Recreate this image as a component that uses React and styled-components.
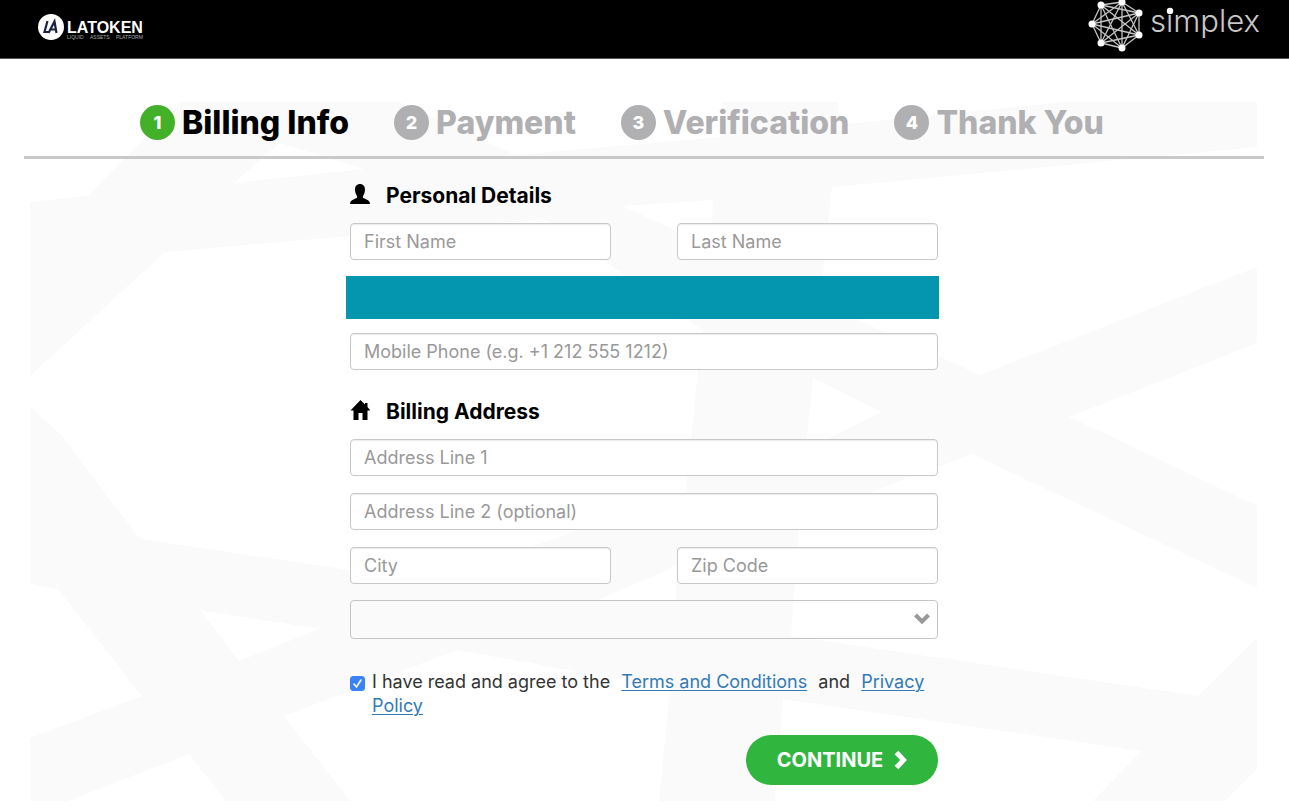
import React, { useState } from 'react';
import styled, { createGlobalStyle } from 'styled-components';

const GlobalStyle = createGlobalStyle`
  *,
  *:before,
  *:after {
    box-sizing: border-box;
  }

  body {
    margin: 0;
    background: #fff;
    color: #333;
    font-family: Inter, 'Open Sans', sans-serif;
    font-size: 18px;
    line-height: 24px;
  }
`;

const StyledHeader = styled.header`
  display: flex;
  justify-content: space-between;
  align-items: flex-start;
  height: 59px;
  padding: 0 24px 0 38px;
  overflow: hidden;
  background: #000;
  border-bottom: 1px solid #555;
`;

const StyledLatoken = styled.a`
  display: flex;
  align-items: flex-start;
  gap: 3px;
  padding-top: 14px;
  color: #fff;
  font-family: 'Liberation Sans', sans-serif;
  text-decoration: none;

  svg {
    display: block;
  }
`;

const StyledWordmark = styled.span`
  display: block;
  padding-top: 6px;
  font-size: 16px;
  font-weight: 700;
  line-height: 15px;
`;

const StyledTagline = styled.span`
  display: flex;
  justify-content: space-between;
  color: #aaa;
  font-size: 5px;
  font-weight: 400;
  line-height: 5px;
`;

const StyledMain = styled.main`
  position: relative;
  margin: 43px 25px 11px 24px;
`;

const StyledArtwork = styled.svg`
  position: absolute;
  top: 0;
  left: 6px;
  z-index: -1;
  width: calc(100% - 13px);
  height: 100%;
`;

const StyledSteps = styled.ol`
  display: flex;
  gap: 45px;
  margin: 0;
  padding: 3px 0 16px 116px;
  list-style: none;
  border-bottom: 3px solid #c9c9c9;
`;

const StyledStep = styled.li`
  display: flex;
  align-items: center;
  gap: 7px;
  color: ${({ $active }) => ($active ? '#000' : '#b0b0b3')};
  font-size: 32px;
  font-weight: 800;
  line-height: 35px;
  white-space: nowrap;
`;

const StyledNumber = styled.span`
  width: 35px;
  height: 35px;
  border-radius: 50%;
  background: ${({ $active }) => ($active ? '#43b02a' : '#b0b0b3')};
  color: #fff;
  font-size: 18px;
  font-weight: 800;
  text-align: center;
`;

const StyledForm = styled.form`
  display: flex;
  flex-direction: column;
  gap: 17px;
  max-width: 588px;
  margin: 0 auto;
  padding: 25px 0 16px;
`;

const StyledHeading = styled.h2`
  display: flex;
  align-items: flex-start;
  gap: 16px;
  margin: ${({ $spaced }) => ($spaced ? '13px 0 -2px' : '0 0 -2px')};
  color: #000;
  font-size: 21px;
  font-weight: 700;
  line-height: 24px;
`;

const StyledRow = styled.div`
  display: grid;
  grid-template-columns: 1fr 1fr;
  gap: 66px;
`;

const StyledInput = styled.input`
  width: 100%;
  height: 37px;
  padding: 0 13px;
  border: 1px solid #c8c8c8;
  border-radius: 4px;
  background: #fff;
  box-shadow: inset 0 1px 1px rgba(0, 0, 0, 0.08);
  color: #333;
  font: inherit;

  &::placeholder {
    color: #999;
    opacity: 1;
  }
`;

const StyledBanner = styled.div`
  height: 43px;
  margin: -1px -1px -3px -4px;
  background: #0396ae;
`;

const StyledSelectWrap = styled.div`
  position: relative;
  margin-top: -1px;

  select {
    display: block;
    width: 100%;
    height: 39px;
    padding: 0 40px 0 13px;
    appearance: none;
    border: 1px solid #c4c4c4;
    border-radius: 4px;
    background: transparent;
    font: inherit;
  }

  svg {
    position: absolute;
    top: 12px;
    right: 8px;
    pointer-events: none;
  }
`;

const StyledAgreement = styled.div`
  display: flex;
  align-items: flex-start;
  gap: 7px;
  margin-top: 14px;

  a {
    margin: 0 6px;
    color: #337ab7;
    text-decoration: underline;
    text-decoration-thickness: 1px;
    text-underline-offset: 2px;

    &:last-child {
      margin-right: 0;
    }
  }
`;

const StyledCheck = styled.span`
  position: relative;
  flex: none;
  width: 15px;
  height: 15px;
  margin-top: 6px;

  input {
    display: block;
    width: 15px;
    height: 15px;
    margin: 0;
    appearance: none;
    border: 1px solid #b5b5b5;
    border-radius: 3px;
    background: #fff;

    &:checked {
      border-color: #3b82f7;
      background: #3b82f7;
    }
  }

  svg {
    position: absolute;
    top: 0;
    left: 0;
    pointer-events: none;
  }
`;

const StyledContinue = styled.button`
  display: flex;
  align-items: center;
  justify-content: center;
  align-self: flex-end;
  gap: 11px;
  width: 192px;
  height: 50px;
  padding: 0;
  border: 0;
  border-radius: 25px;
  background: #30b53f;
  color: #fff;
  font: inherit;
  font-size: 20px;
  font-weight: 700;
  cursor: pointer;
`;

// White facets laid over a light grey sheet
const facets = [
  '30,102 181,102 88,196 30,202',
  '280,143 364,169 234,183',
  '399,102 722,102 722,137 515,155',
  '838,102 1065,102 838,125',
  '832,187 1257,147 1257,267 980,375 820,303',
  '622,206 713,200 711,247',
  '165,252 545,219 702,330 686,492 576,531 430,583 343,569 140,539 62,436 30,407 30,376',
  '813,378 882,412 806,450',
  '972,454 1257,588 1257,638 1198,696 791,636 799,525 879,489',
  '1069,417 1257,343 1257,506 1110,436',
  '598,600 676,566 676,600',
  '30,584 58,589 142,696 30,738',
  '200,610 319,629 239,661',
  '68,801 189,754 226,801',
  '457,650 670,688 659,801 350,801 284,716',
  '783,699 1141,751 1093,801 775,801',
  '1257,769 1225,801 1257,801',
];

const Artwork = () => (
  <StyledArtwork viewBox="30 102 1227 699" preserveAspectRatio="none" aria-hidden="true">
    <rect x="30" y="102" width="1227" height="699" fill="#fafafa" />
    {facets.map(points => (
      <polygon key={points} points={points} fill="#fff" />
    ))}
  </StyledArtwork>
);

const nodes = [
  [31, 5],
  [52, 2],
  [69, 13],
  [69, 35],
  [52, 48],
  [31, 43],
  [22, 24],
];

const SimplexLogo = () => (
  <svg width="195" height="58" viewBox="0 0 195 58" role="img" aria-label="simplex">
    <g stroke="#c4c4c4" strokeWidth="1.3">
      {nodes.flatMap(([x1, y1], i) =>
        nodes
          .slice(i + 1)
          .map(([x2, y2]) => <line key={`${x1}${y1}${x2}${y2}`} x1={x1} y1={y1} x2={x2} y2={y2} />),
      )}
    </g>
    {nodes.map(([x, y]) => (
      <circle key={`${x}${y}`} cx={x} cy={y} r="3.5" fill="#fff" />
    ))}
    <text x="80" y="32" fill="#c8c8c8" fontFamily="Inter, sans-serif" fontSize="31" fontWeight="300">
      simplex
    </text>
    <circle cx="100" cy="11" r="3.2" fill="#fff" />
  </svg>
);

const LatokenMark = () => (
  <svg width="26" height="26" viewBox="0 0 26 26" aria-hidden="true">
    <circle cx="13" cy="13" r="13" fill="#fff" />
    <path
      d="M9.5 7L6.5 18H11M10.5 19L16.5 7.5L18.5 19M13 15.5H18"
      fill="none"
      stroke="#1c2340"
      strokeWidth="2.2"
    />
  </svg>
);

const UserIcon = () => (
  <svg width="20" height="20" viewBox="0 0 20 20" aria-hidden="true">
    <path d="M10 0C6.800 0 5 2.200 5 5.600C5 8.400 6 10.600 7 12V13.700L2 16.200Q0 17.200 0 20H20Q20 17.200 18 16.200L13 13.700V12C14 10.600 15 8.400 15 5.600C15 2.200 13.200 0 10 0Z" />
  </svg>
);

const HomeIcon = () => (
  <svg width="20" height="20" viewBox="0 0 20 20" aria-hidden="true">
    <path d="M10.500 0L0.500 10.500H3.500V20H8.500V13H12.500V20H17.500V10.500H20.500L17.500 7V3H15V4.600Z" />
  </svg>
);

const steps = ['Billing Info', 'Payment', 'Verification', 'Thank You'];

const App = () => {
  const [agreed, setAgreed] = useState(true);

  return (
    <>
      <GlobalStyle />
      <StyledHeader>
        <StyledLatoken href="#latoken">
          <LatokenMark />
          <span>
            <StyledWordmark>LATOKEN</StyledWordmark>
            <StyledTagline>
              <span>LIQUID</span>
              <span>ASSETS</span>
              <span>PLATFORM</span>
            </StyledTagline>
          </span>
        </StyledLatoken>
        <SimplexLogo />
      </StyledHeader>

      <StyledMain>
        <Artwork />
        <StyledSteps>
          {steps.map((step, i) => (
            <StyledStep key={step} $active={i === 0}>
              <StyledNumber $active={i === 0}>{i + 1}</StyledNumber>
              {step}
            </StyledStep>
          ))}
        </StyledSteps>

        <StyledForm onSubmit={e => e.preventDefault()}>
          <StyledHeading>
            <UserIcon />
            Personal Details
          </StyledHeading>
          <StyledRow>
            <StyledInput aria-label="First Name" placeholder="First Name" />
            <StyledInput aria-label="Last Name" placeholder="Last Name" />
          </StyledRow>
          <StyledBanner />
          <StyledInput
            type="tel"
            aria-label="Mobile Phone"
            placeholder="Mobile Phone (e.g. +1 212 555 1212)"
          />

          <StyledHeading $spaced>
            <HomeIcon />
            Billing Address
          </StyledHeading>
          <StyledInput aria-label="Address Line 1" placeholder="Address Line 1" />
          <StyledInput aria-label="Address Line 2" placeholder="Address Line 2 (optional)" />
          <StyledRow>
            <StyledInput aria-label="City" placeholder="City" />
            <StyledInput aria-label="Zip Code" placeholder="Zip Code" />
          </StyledRow>
          <StyledSelectWrap>
            <select aria-label="Country" defaultValue="">
              <option value="" />
            </select>
            <svg width="16" height="13" viewBox="0 0 16 13" aria-hidden="true">
              <path d="M1.500 3L8 9.500L14.500 3" fill="none" stroke="#999" strokeWidth="4" />
            </svg>
          </StyledSelectWrap>

          <StyledAgreement>
            <StyledCheck>
              <input
                id="agree"
                type="checkbox"
                checked={agreed}
                onChange={e => setAgreed(e.target.checked)}
              />
              {agreed && (
                <svg width="15" height="15" viewBox="0 0 15 15" aria-hidden="true">
                  <path
                    d="M4 8L6.500 11L11 4"
                    fill="none"
                    stroke="#fff"
                    strokeWidth="1.6"
                    strokeLinecap="round"
                  />
                </svg>
              )}
            </StyledCheck>
            <label htmlFor="agree">
              I have read and agree to the <a href="#terms">Terms and Conditions</a> and{' '}
              <a href="#privacy">Privacy Policy</a>
            </label>
          </StyledAgreement>

          <StyledContinue type="submit">
            CONTINUE
            <svg width="13" height="20" viewBox="0 0 13 20" aria-hidden="true">
              <path d="M2.500 2.500L9.500 10L2.500 17.500" fill="none" stroke="#fff" strokeWidth="5" />
            </svg>
          </StyledContinue>
        </StyledForm>
      </StyledMain>
    </>
  );
};

export default App;
